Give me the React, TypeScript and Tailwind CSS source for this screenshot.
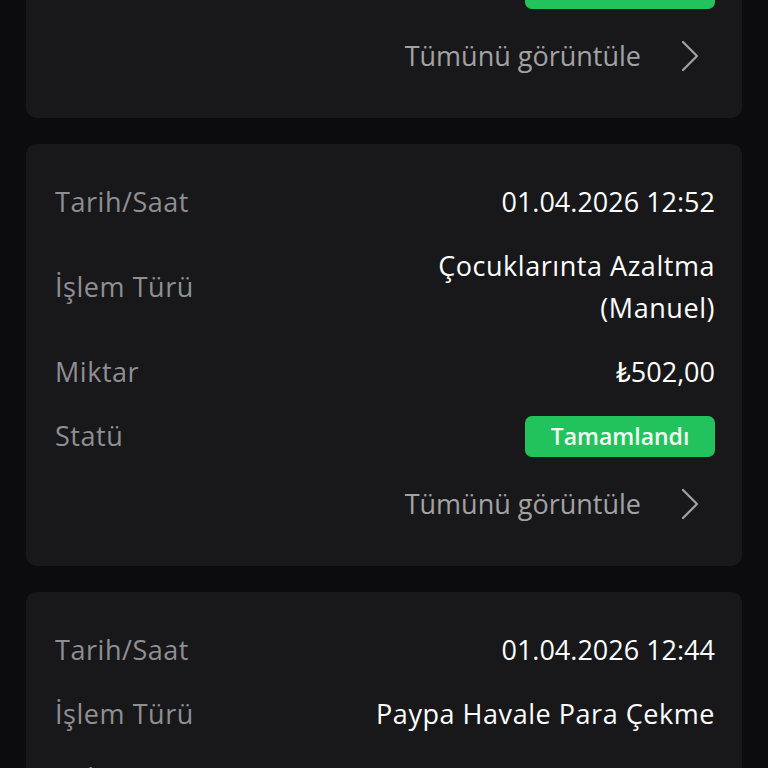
import React from 'react';

interface Transaction {
  date: string;
  type: string[];
  amount: string;
  status: string;
}

const transactions: Transaction[] = [
  {
    date: '01.04.2026 13:05',
    type: ['Çocuklarınta Azaltma', '(Manuel)'],
    amount: '₺250,00',
    status: 'Tamamlandı',
  },
  {
    date: '01.04.2026 12:52',
    type: ['Çocuklarınta Azaltma', '(Manuel)'],
    amount: '₺502,00',
    status: 'Tamamlandı',
  },
  {
    date: '01.04.2026 12:44',
    type: ['Paypa Havale Para Çekme'],
    amount: '₺500,00',
    status: 'Tamamlandı',
  },
];

const Row: React.FC<{ label: string; children: React.ReactNode }> = ({ label, children }) => (
  <div className="flex items-center justify-between">
    <span className="text-[#8f8f93] leading-[42px] tracking-[0.02em]">{label}</span>
    <div className="text-right text-white leading-[42px]">{children}</div>
  </div>
);

const TransactionCard: React.FC<{ tx: Transaction }> = ({ tx }) => {
  return (
    <div className="flex flex-col gap-[22px] rounded-[10px] bg-[#18181a] pl-[29px] pr-[27px] pt-[37px] pb-[41px]">
      <Row label="Tarih/Saat">{tx.date}</Row>
      <Row label="İşlem Türü">
        {tx.type.map((line, i) => (
          <div key={i} className="tracking-[0.02em]">{line}</div>
        ))}
      </Row>
      <Row label="Miktar">{tx.amount}</Row>
      <div className="flex items-center justify-between">
        <span className="text-[#8f8f93] leading-[42px] tracking-[0.02em]">Statü</span>
        <span className="flex h-[41px] w-[190px] items-center justify-center rounded-[7px] bg-[#22c35d] text-[23px] font-semibold text-[#f2fff5]">
          {tx.status}
        </span>
      </div>
      <div className="mt-[4px] flex items-center justify-end">
        <span className="text-[#a2a2a5] leading-[42px]">Tümünü görüntüle</span>
        <svg className="ml-[40px] mr-[16px]" width="18" height="32" viewBox="0 0 18 32" fill="none">
          <polyline
            points="2,2 16,16 2,30"
            stroke="#a2a2a5"
            strokeWidth="2.2"
            strokeLinecap="round"
            strokeLinejoin="round"
          />
        </svg>
      </div>
    </div>
  );
};

const App: React.FC = () => {
  return (
    <div
      className="h-[768px] overflow-hidden bg-[#0c0c0e] text-[27px]"
      style={{ fontFamily: '"Open Sans", Lato, sans-serif' }}
    >
      <div className="-mt-[304px] flex flex-col gap-[26px] px-[26px] pb-10">
        {transactions.map((tx, index) => (
          <TransactionCard key={index} tx={tx} />
        ))}
      </div>
    </div>
  );
};

export default App;
